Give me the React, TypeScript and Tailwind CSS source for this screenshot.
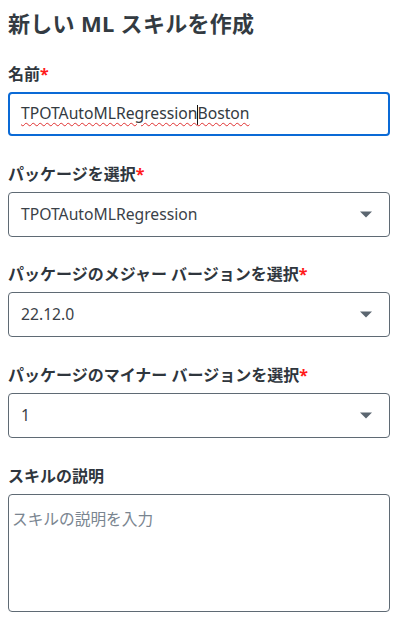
function Caret() {
  return (
    <svg width="12" height="7" viewBox="0 0 12 7" aria-hidden="true" className="shrink-0">
      <path d="M0 0.5 L12 0.5 L6 6.5 Z" fill="#5b6670" />
    </svg>
  );
}

function Label({ text, required = false }: { text: string; required?: boolean }) {
  return (
    <p className="text-[16px] font-bold leading-[20px] text-[#2f363d]">
      {text}
      {required && <span className="text-[#ff1a1a]">*</span>}
    </p>
  );
}

function SelectBox({ value }: { value: string }) {
  return (
    <div className="flex h-[45px] items-center justify-between rounded-[4px] border border-[#5f6a74] bg-white pl-3 pr-[17px]">
      <span className="text-[15.7px] text-[#3a4148]">{value}</span>
      <Caret />
    </div>
  );
}

export default function App() {
  const font = { fontFamily: '"Noto Sans", "Noto Sans CJK JP", sans-serif' };

  return (
    <div className="min-h-[629px] bg-white" style={font}>
      <div className="ml-2 flex w-[382px] flex-col pt-[8px]">
        <h1 className="text-[22px] font-bold leading-[30px] tracking-[0.3px] text-[#333b42]">新しい ML スキルを作成</h1>

        <div className="mt-[26px] flex flex-col gap-2">
          <Label text="名前" required />
          <div className="flex h-[44px] items-center rounded-[4px] border-2 border-[#0a6ad6] bg-white pl-[11px]">
            <span className="text-[15.7px] text-[#333a41] underline decoration-wavy decoration-[#e03030] decoration-1 underline-offset-[3px]">
              TPOTAutoMLRegression
              <span className="-mr-px inline-block h-[20px] w-px bg-[#111] align-middle" />
              Boston
            </span>
          </div>
        </div>

        <div className="mt-[28px] flex flex-col gap-2">
          <Label text="パッケージを選択" required />
          <SelectBox value="TPOTAutoMLRegression" />
        </div>

        <div className="mt-[27px] flex flex-col gap-2">
          <Label text="パッケージのメジャー バージョンを選択" required />
          <SelectBox value="22.12.0" />
        </div>

        <div className="mt-[28px] flex flex-col gap-2">
          <Label text="パッケージのマイナー バージョンを選択" required />
          <SelectBox value="1" />
        </div>

        <div className="mt-[28px] flex flex-col gap-2">
          <Label text="スキルの説明" />
          <div className="h-[118px] rounded-[4px] border border-[#5f6a74] bg-white px-[3px] pt-[12px]">
            <span className="text-[15.7px] text-[#7a8590]">スキルの説明を入力</span>
          </div>
        </div>
      </div>
    </div>
  );
}
